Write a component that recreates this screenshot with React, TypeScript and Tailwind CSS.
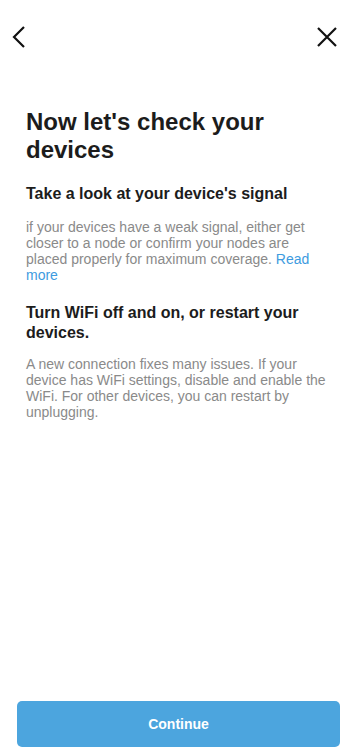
import React from "react";

export default function App() {
  return (
    <div className="w-[353px] h-[756px] bg-white flex flex-col" style={{ fontFamily: '"Liberation Sans", Arial, sans-serif' }}>
      <div className="flex items-center justify-between h-[74px] pl-[11px] pr-[16px]">
        <svg width="16" height="24" viewBox="0 0 16 24">
          <path d="M13 2 L3 12 L13 22" fill="none" stroke="#111" strokeWidth="2.2" />
        </svg>
        <svg width="20" height="20" viewBox="0 0 20 20">
          <path d="M1 1 L19 19 M19 1 L1 19" fill="none" stroke="#111" strokeWidth="2.2" />
        </svg>
      </div>
      <div className="flex-1 px-[26px] pt-[34px]">
        <h1 className="text-[24px] leading-[28px] font-bold text-[#1c1c1c]">Now let's check your devices</h1>
        <h2 className="mt-[20px] text-[16px] leading-[20px] font-bold text-[#1c1c1c]">Take a look at your device's signal</h2>
        <p className="mt-[15px] text-[14px] leading-[16px] text-[#8a8a8a]">
          if your devices have a weak signal, either get closer to a node or confirm your nodes are placed properly for maximum coverage. <span className="text-[#3d9be0]">Read more</span>
        </p>
        <h2 className="mt-[20px] text-[16px] leading-[19.5px] font-bold text-[#1c1c1c]">Turn WiFi off and on, or restart your devices.</h2>
        <p className="mt-[14px] text-[14px] leading-[16px] text-[#8a8a8a]">
          A new connection fixes many issues. If your device has WiFi settings, disable and enable the WiFi. For other devices, you can restart by unplugging.
        </p>
      </div>
      <div className="pl-[17px] pr-[13px] pb-[9px]">
        <button className="w-full h-[46px] rounded-[5px] bg-[#4ca5de] text-white text-[14px] font-bold">Continue</button>
      </div>
    </div>
  );
}
